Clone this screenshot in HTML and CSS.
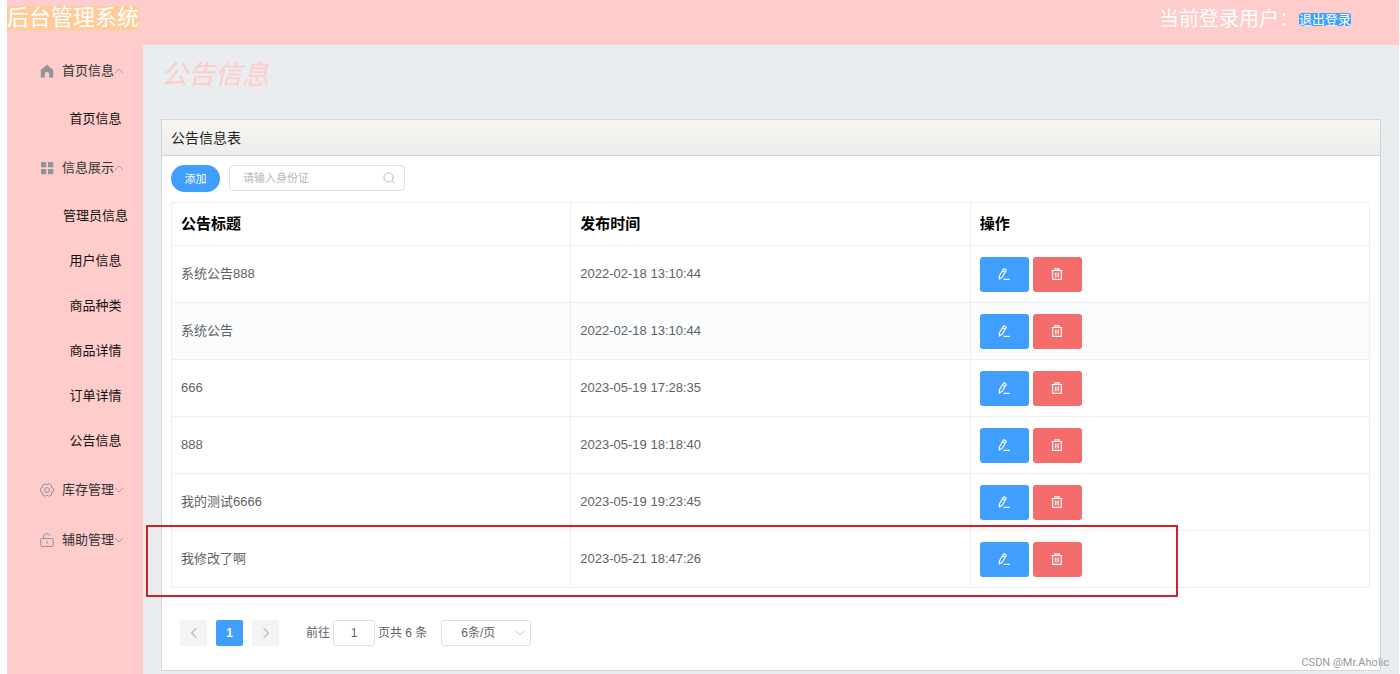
FILE: index.html
```html
<!DOCTYPE html>
<html lang="zh-CN">
<head>
<meta charset="utf-8">
<title>后台管理系统</title>
<link rel="stylesheet" href="styles.css">
</head>
<body>
<svg class="sprite" aria-hidden="true">
  <symbol id="up" viewBox="0 0 10 10"><path d="M1 7l4-4 4 4" fill="none" stroke="currentColor" stroke-width=".8"/></symbol>
  <symbol id="down" viewBox="0 0 10 10"><path d="M1 3l4 4 4-4" fill="none" stroke="currentColor" stroke-width=".8"/></symbol>
  <symbol id="edit" viewBox="0 0 12 12"><path d="M1.300 11l.2-3.200L5.400 1.200q.4-.6 1-.3l1.400.8q.6.400.2 1L4.200 9.300zM4.600 2.800l2.500 1.500M6 11.300h5.400" fill="none" stroke="currentColor" stroke-width="1.200" stroke-linejoin="round" stroke-linecap="round"/></symbol>
  <symbol id="trash" viewBox="0 0 12 12"><path d="M.6 2.500h10.800M3.800 2.300V.8h4.400v1.500M1.700 2.700v8.600h8.600V2.700M4.800 4.500v4.800M7.200 4.500v4.800" fill="none" stroke="currentColor" stroke-width="1.200"/></symbol>
</svg>
<header class="topbar">
  <h1 class="brand">后台管理系统</h1>
  <div class="account"><span>当前登录用户：</span><a class="logout" href="#">退出登录</a></div>
</header>
<div class="layout">
  <nav class="sidebar">
    <button class="group" type="button">
      <svg class="group-icon" viewBox="0 0 14 14"><path d="M7 .8L13.200 6v7.400H9.200V10a2.200 2.200 0 0 0-4.400 0v3.400H.8V6z" fill="currentColor"/></svg>
      <span>首页信息</span><svg class="arrow"><use href="#up"/></svg>
    </button>
    <ul class="sub"><li><a href="#">首页信息</a></li></ul>
    <button class="group" type="button">
      <svg class="group-icon" viewBox="0 0 14 14"><path d="M1 1h5.300v5.300H1zM8 1h5.300v5.300H8zM1 8h5.300v5.300H1zM8 8h5.300v5.300H8z" fill="currentColor"/></svg>
      <span>信息展示</span><svg class="arrow"><use href="#up"/></svg>
    </button>
    <ul class="sub">
      <li><a href="#">管理员信息</a></li>
      <li><a href="#">用户信息</a></li>
      <li><a href="#">商品种类</a></li>
      <li><a href="#">商品详情</a></li>
      <li><a href="#">订单详情</a></li>
      <li><a href="#">公告信息</a></li>
    </ul>
    <button class="group" type="button">
      <svg class="group-icon" viewBox="0 0 14 14"><g transform="translate(7 7)" fill="none" stroke="currentColor"><path d="M6.400-1.600V1.600L4.400 2.500 4.600 4.700 1.800 6.300 0 5-1.800 6.300-4.600 4.700-4.400 2.500-6.400 1.600V-1.600L-4.400-2.500-4.600-4.700-1.800-6.300 0-5 1.800-6.300 4.600-4.700 4.400-2.500z" stroke-linejoin="round"/><circle r="2.400"/></g></svg>
      <span>库存管理</span><svg class="arrow"><use href="#down"/></svg>
    </button>
    <button class="group" type="button">
      <svg class="group-icon" viewBox="0 0 14 14"><g fill="none" stroke="currentColor"><rect x=".8" y="5.500" width="12.400" height="8" rx=".8"/><path d="M3.500 5.500V4a3.400 3.400 0 0 1 6.600-1.200M7 8v3"/></g></svg>
      <span>辅助管理</span><svg class="arrow"><use href="#down"/></svg>
    </button>
  </nav>
  <main class="main">
    <h2 class="page-title">公告信息</h2>
    <section class="card">
      <h3 class="card-title">公告信息表</h3>
      <div class="card-body">
        <div class="toolbar">
          <button class="add" type="button">添加</button>
          <label class="search">
            <input type="text" placeholder="请输入身份证" aria-label="请输入身份证">
            <svg class="search-icon" viewBox="0 0 12 12"><path d="M9 9l2.200 2.200" stroke="currentColor"/><circle cx="5.500" cy="5.500" r="4.600" fill="none" stroke="currentColor"/></svg>
          </label>
        </div>
        <div class="table-wrap">
          <table class="table">
            <thead><tr><th>公告标题</th><th>发布时间</th><th>操作</th></tr></thead>
            <tbody>
              <tr><td>系统公告888</td><td>2022-02-18 13:10:44</td><td><div class="actions"><button class="act edit" type="button" aria-label="编辑"><svg><use href="#edit"/></svg></button><button class="act del" type="button" aria-label="删除"><svg><use href="#trash"/></svg></button></div></td></tr>
              <tr class="striped"><td>系统公告</td><td>2022-02-18 13:10:44</td><td><div class="actions"><button class="act edit" type="button" aria-label="编辑"><svg><use href="#edit"/></svg></button><button class="act del" type="button" aria-label="删除"><svg><use href="#trash"/></svg></button></div></td></tr>
              <tr><td>666</td><td>2023-05-19 17:28:35</td><td><div class="actions"><button class="act edit" type="button" aria-label="编辑"><svg><use href="#edit"/></svg></button><button class="act del" type="button" aria-label="删除"><svg><use href="#trash"/></svg></button></div></td></tr>
              <tr><td>888</td><td>2023-05-19 18:18:40</td><td><div class="actions"><button class="act edit" type="button" aria-label="编辑"><svg><use href="#edit"/></svg></button><button class="act del" type="button" aria-label="删除"><svg><use href="#trash"/></svg></button></div></td></tr>
              <tr><td>我的测试6666</td><td>2023-05-19 19:23:45</td><td><div class="actions"><button class="act edit" type="button" aria-label="编辑"><svg><use href="#edit"/></svg></button><button class="act del" type="button" aria-label="删除"><svg><use href="#trash"/></svg></button></div></td></tr>
              <tr><td>我修改了啊</td><td>2023-05-21 18:47:26</td><td><div class="actions"><button class="act edit" type="button" aria-label="编辑"><svg><use href="#edit"/></svg></button><button class="act del" type="button" aria-label="删除"><svg><use href="#trash"/></svg></button></div></td></tr>
            </tbody>
          </table>
          <div class="marker"></div>
        </div>
        <div class="pager">
          <div class="pages">
            <button class="page" type="button" aria-label="上一页"><svg viewBox="0 0 10 10"><path d="M7 1L3 5l4 4" fill="none" stroke="currentColor"/></svg></button>
            <button class="page current" type="button">1</button>
            <button class="page" type="button" aria-label="下一页"><svg viewBox="0 0 10 10"><path d="M3 1l4 4-4 4" fill="none" stroke="currentColor"/></svg></button>
          </div>
          <div class="jump"><label for="jump">前往</label><input id="jump" type="text" value="1"><span>页共 6 条</span></div>
          <div class="size"><select aria-label="每页条数"><option>6条/页</option></select><svg class="size-arrow"><use href="#down"/></svg></div>
        </div>
      </div>
    </section>
  </main>
</div>
<div class="credit">CSDN @Mr.Aholic</div>
</body>
</html>
```
FILE: styles.css
```css
* { box-sizing: border-box; }
body {
  margin: 0;
  padding: 0 1px 0 7px;
  min-height: 100vh;
  display: flex;
  flex-direction: column;
  background: #fff;
  font: 13px/20px "Liberation Sans", "Noto Sans CJK SC", sans-serif;
  color: #606266;
}
button, input, select { font: inherit; color: inherit; margin: 0; padding: 0; border: 0; background: none; }
button { cursor: pointer; }
a { text-decoration: none; }
h1, h2, h3 { margin: 0; font-weight: 400; }
.sprite { position: absolute; width: 0; height: 0; }

.topbar {
  height: 45px;
  padding: 6px 48px 0 0;
  display: flex;
  justify-content: space-between;
  align-items: flex-start;
  background: #fcc;
  color: #fff;
}
.brand { font-size: 22px; line-height: 24px; background: #fc9; }
.account { display: flex; align-items: center; font-size: 20px; line-height: 26px; }
.logout { font-size: 13px; line-height: 13px; color: #fff; background: #409eff; border-radius: 3px; }

.layout { flex: 1; display: flex; }
.sidebar { width: 136px; flex: none; background: #fcc; }
.group {
  width: 100%;
  height: 50px;
  padding: 1px 0 0 33px;
  display: flex;
  align-items: center;
  color: #303133;
}
.group-icon { width: 14px; height: 14px; margin-right: 8px; color: #909399; }
.arrow { width: 10px; height: 10px; color: #909399; }
.sub { margin: 0; padding: 1px 0; list-style: none; }
.sub a {
  display: block;
  padding-left: 41px;
  line-height: 45px;
  text-align: center;
  color: #111;
}

.main { flex: 1; min-width: 0; padding: 14px 18px 3px; background: #e9edf0; }
.page-title { font-size: 27px; line-height: 32px; font-style: italic; color: #fcc; }
.card { margin-top: 28px; border: 1px solid #d3d7d9; background: #fff; }
.card-title {
  height: 36px;
  padding: 0 9px;
  font-size: 14px;
  line-height: 36px;
  color: #222;
  border-bottom: 1px solid #d3d3d3;
  background: linear-gradient(#f8f6f1, #ededed);
}
.card-body { padding: 9px 10px 24px 9px; }
.toolbar { display: flex; align-items: flex-start; gap: 9px; }
.add { width: 49px; height: 27px; border-radius: 14px; font-size: 11px; background: #409eff; color: #fff; }
.search {
  width: 176px;
  height: 26px;
  padding: 0 9px 0 13px;
  display: flex;
  align-items: center;
  border: 1px solid #dcdfe6;
  border-radius: 4px;
  font-size: 11px;
}
.search input { flex: 1; min-width: 0; outline: 0; }
.search input::placeholder { color: #b4b8c0; }
.search-icon { width: 12px; height: 12px; color: #b4b8c0; }

.table-wrap { position: relative; margin-top: 10px; }
.table { width: 100%; table-layout: fixed; border-collapse: collapse; }
.table th, .table td { padding: 0 9px; border: 1px solid #ebeef3; text-align: left; }
.table th { height: 43px; font-size: 15px; color: #000; }
.table td { height: 57px; }
.striped { background: #fafcfe; }
.actions { display: flex; gap: 4px; }
.act {
  width: 49px;
  height: 35px;
  display: flex;
  align-items: center;
  justify-content: center;
  border-radius: 3px;
  color: #fff;
}
.act svg { width: 12px; height: 12px; }
.edit { background: #409eff; }
.del { background: #f56c6c; }
.marker {
  position: absolute;
  left: -25px;
  right: 192px;
  bottom: -9px;
  height: 72px;
  border: 2px solid #d02028;
  pointer-events: none;
}

.pager { margin: 32px 0 0 9px; display: flex; align-items: center; font-size: 12px; }
.pages { display: flex; gap: 9px; }
.page {
  width: 27px;
  height: 26px;
  display: flex;
  align-items: center;
  justify-content: center;
  border-radius: 2px;
  background: #f4f4f5;
  color: #b4b8c0;
}
.page svg { width: 12px; height: 12px; }
.current { background: #409eff; color: #fff; font-weight: 700; }
.jump { margin-left: 27px; display: flex; align-items: center; gap: 3px; }
.jump input { width: 42px; height: 26px; text-align: center; border: 1px solid #dcdfe6; border-radius: 3px; }
.size { position: relative; margin-left: 14px; }
.size select {
  width: 90px;
  height: 26px;
  padding-left: 19px;
  appearance: none;
  border: 1px solid #dcdfe6;
  border-radius: 3px;
}
.size-arrow { position: absolute; right: 6px; top: 8px; width: 10px; height: 10px; color: #b4b8c0; }
.credit { position: absolute; right: 11px; bottom: 1px; font-family: Roboto, sans-serif; font-size: 11px; color: #999; }
```
